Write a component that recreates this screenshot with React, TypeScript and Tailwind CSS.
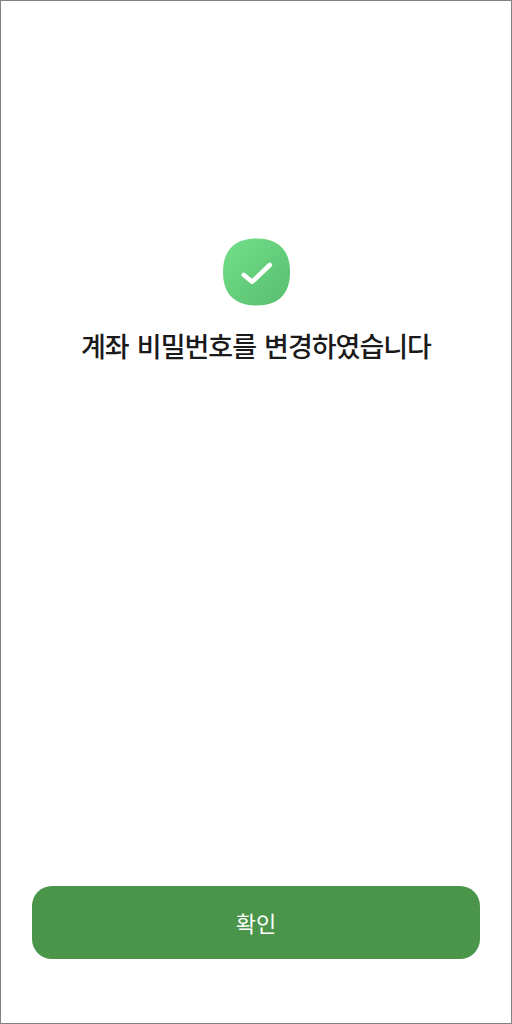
export default function App() {
  return (
    <div className="flex h-[1024px] w-[512px] flex-col items-center border border-[#808080] bg-white pt-[237px] font-['Noto_Sans_CJK_KR','Noto_Sans',sans-serif]">
      <svg width="67" height="68" viewBox="0 0 67 68" fill="none" className="block">
        <defs>
          <linearGradient id="g" x1="0" y1="0" x2="1" y2="1">
            <stop offset="0" stopColor="#74e08a" />
            <stop offset="1" stopColor="#56bd6e" />
          </linearGradient>
        </defs>
        <path d="M33.5 0.5C55.5 0.5 67 12 67 34C67 56 55.5 67.5 33.5 67.5C11.5 67.5 0 56 0 34C0 12 11.5 0.5 33.5 0.5Z" fill="url(#g)" />
        <path d="M20.8 37 L29.2 43.7 L46.8 27" stroke="white" strokeWidth="4.6" strokeLinecap="round" strokeLinejoin="round" />
      </svg>
      <h1 className="mt-[20px] text-[27px] leading-[40px] font-medium tracking-[-1px] [word-spacing:3px] whitespace-nowrap text-[#1a1a1a]">
        계좌 비밀번호를 변경하였습니다
      </h1>
      <div className="mt-auto mb-[64px] flex h-[73px] w-[448px] items-center justify-center rounded-[20px] bg-[#4a954a] text-[22px] text-white">
        확인
      </div>
    </div>
  );
}
